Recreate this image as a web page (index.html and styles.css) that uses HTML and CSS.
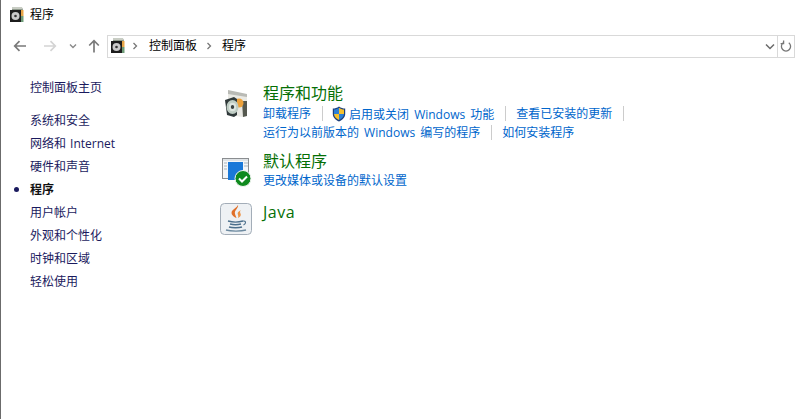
FILE: index.html
```html
<!DOCTYPE html>
<html lang="zh-CN">
<head>
  <meta charset="UTF-8">
  <title>程序</title>
  <link rel="stylesheet" href="styles.css">
</head>
<body>
  <svg class="defs" width="0" height="0">
    <symbol id="disc-box" viewBox="0 0 16 16">
      <path d="M3 0.500h10l1 2v12H3z" fill="#8f9a8c"/>
      <path d="M3 0.500h10l.6 1.600H3z" fill="#c9cdc4"/>
      <path d="M11 3h3.500v6H11z" fill="#e8a648"/>
      <path d="M11 9h3.500v6H11z" fill="#6f9c78"/>
      <rect x="1" y="3" width="11" height="12" fill="#1c1c1c"/>
      <circle cx="6.500" cy="9" r="4" fill="#c9c9c9"/>
      <circle cx="6.500" cy="9" r="1.300" fill="#333"/>
    </symbol>
  </svg>

  <div class="titlebar">
    <svg class="title-icon"><use href="#disc-box"/></svg>
    <span>程序</span>
  </div>

  <div class="navbar">
    <svg class="nav-btn" width="16" height="16" viewBox="0 0 16 16"><path d="M14 8H3M7.500 3.200 2.700 8l4.800 4.800" fill="none" stroke="#7a7a7a" stroke-width="1.700"/></svg>
    <svg class="nav-btn nav-forward" width="16" height="16" viewBox="0 0 16 16"><path d="M2 8h11M8.500 3.200 13.300 8l-4.800 4.800" fill="none" stroke="#d4d4d4" stroke-width="1.700"/></svg>
    <svg class="nav-small" width="8" height="6" viewBox="0 0 8 6"><path d="M1 1.500 4 4.500l3-3" fill="none" stroke="#8a8a8a" stroke-width="1.400"/></svg>
    <svg class="nav-btn nav-up" width="16" height="16" viewBox="0 0 16 16"><path d="M8 14.500V3M3.200 7.500 8 2.700l4.800 4.800" fill="none" stroke="#7a7a7a" stroke-width="1.700"/></svg>
    <div class="address">
      <svg class="address-icon"><use href="#disc-box"/></svg>
      <svg class="crumb-sep" width="6" height="8" viewBox="0 0 6 8"><path d="M1.500 1 4.500 4l-3 3" fill="none" stroke="#777" stroke-width="1.300"/></svg>
      <span class="crumb">控制面板</span>
      <svg class="crumb-sep" width="6" height="8" viewBox="0 0 6 8"><path d="M1.500 1 4.500 4l-3 3" fill="none" stroke="#777" stroke-width="1.300"/></svg>
      <span class="crumb">程序</span>
      <svg class="address-drop" width="10" height="7" viewBox="0 0 10 7"><path d="M1 1.500 5 5.500l4-4" fill="none" stroke="#6a6a6a" stroke-width="1.500"/></svg>
      <div class="address-refresh">
        <svg width="12" height="13" viewBox="0 0 12 13"><path d="M3.200 2.800a4.600 4.600 0 1 0 5.600 0M3.600 0.600v3h-3" fill="none" stroke="#777" stroke-width="1.300"/></svg>
      </div>
    </div>
  </div>

  <div class="main">
    <ul class="sidebar">
      <li class="home">控制面板主页</li>
      <li>系统和安全</li>
      <li>网络和 Internet</li>
      <li>硬件和声音</li>
      <li class="current">程序</li>
      <li>用户帐户</li>
      <li>外观和个性化</li>
      <li>时钟和区域</li>
      <li>轻松使用</li>
    </ul>

    <div class="content">
      <div class="category cat-programs">
        <svg class="cat-icon" width="32" height="32" viewBox="0 0 32 32">
          <path d="M8 3 27 7v20l-4 2L8 27z" fill="#e9e9e4"/>
          <path d="M8 2 27 6v3L8 6z" fill="#b9bab5"/>
          <path d="M22 13h5v15l-4 1z" fill="#55584f"/>
          <circle cx="19" cy="15" r="4.500" fill="#eda23c"/>
          <path d="M5 12l9-3 3 2v16l-3 2-7-2z" fill="#30393a"/>
          <ellipse cx="12.500" cy="19" rx="6" ry="7" fill="#bfcdc4"/>
          <ellipse cx="12.500" cy="19" rx="3.600" ry="4.200" fill="#dfe6e1"/>
          <ellipse cx="12.500" cy="19" rx="1.700" ry="2" fill="#3c4342"/>
        </svg>
        <div class="cat-body">
          <h2>程序和功能</h2>
          <div class="links">
            <a>卸载程序</a>
            <a class="with-shield">
              <svg width="14" height="16" viewBox="0 0 14 16">
                <path d="M7 0.500C5 2 3 2.500 0.800 2.500V8c0 3.500 3 6 6.200 7.500 3.200-1.500 6.200-4 6.200-7.500V2.500C11 2.500 9 2 7 .5z" fill="#1c3f7c"/>
                <path d="M7 1.800V8H2V3.600C3.800 3.500 5.500 3 7 1.800z" fill="#2b7fd6"/>
                <path d="M7 1.800C8.500 3 10.200 3.500 12 3.600V8H7z" fill="#f5c02c"/>
                <path d="M2 8h5v6C4.500 12.800 2.200 11 2 8z" fill="#f5c02c"/>
                <path d="M7 8h5c-.2 3-2.500 4.800-5 6z" fill="#2b7fd6"/>
              </svg>启用或关闭 Windows 功能</a>
            <a>查看已安装的更新</a>
          </div>
          <div class="links">
            <a>运行为以前版本的 Windows 编写的程序</a>
            <a class="last">如何安装程序</a>
          </div>
        </div>
      </div>

      <div class="category cat-default">
        <svg class="cat-icon" width="32" height="32" viewBox="0 0 32 32">
          <rect x="2.500" y="3.500" width="26" height="20" fill="#f4f6f8" stroke="#8a8d90"/>
          <rect x="3" y="4" width="25" height="2" fill="#dfe3e6"/>
          <rect x="8" y="7" width="15" height="18" fill="#1a78d8"/>
          <path d="M4 8h3M4 11h3M4 14h3M24 8h4M24 11h4" stroke="#a9b4bc"/>
          <circle cx="23" cy="23.500" r="8" fill="#0f8a1e" stroke="#f4f6f4"/>
          <path d="M19 23.500l3 3 5-5" fill="none" stroke="#fff" stroke-width="2"/>
        </svg>
        <div class="cat-body">
          <h2>默认程序</h2>
          <div class="links">
            <a class="last">更改媒体或设备的默认设置</a>
          </div>
        </div>
      </div>

      <div class="category">
        <svg class="cat-icon" width="32" height="32" viewBox="0 0 32 32">
          <rect x="0.500" y="0.500" width="31" height="31" rx="4" fill="#eef1f4" stroke="#a3adb8"/>
          <path d="M18 2c1 3-4 5-3 9 .4 1.500 1 2.500 1.500 4-3.500-1.500-6-4-4.500-7 1-1.800 5-3.500 6-6z" fill="#e0702a"/>
          <path d="M21 7c-3 1.500-4 3-3 5 .4.800.4 1.800 0 3 2.500-1 3.500-2.800 2.300-5-.5-1-.3-2 .7-3z" fill="#ec9448"/>
          <path d="M8 18c4 1.200 11 1.200 15 0M10 21c3 .8 8 .8 11 0M9 24c3 1 10 1 13 0" fill="none" stroke="#4c6f8c" stroke-width="1.400"/>
          <path d="M23 18c3-.5 3.500 2.500.5 4" fill="none" stroke="#4c6f8c" stroke-width="1.100"/>
          <path d="M6 27c5 1.500 15 1.500 20 0" fill="none" stroke="#6d8aa0" stroke-width="1.400"/>
        </svg>
        <div class="cat-body">
          <h2 class="latin">Java</h2>
        </div>
      </div>
    </div>
  </div>
</body>
</html>
```

FILE: styles.css
```css
html, body {
  height: 100%;
}
body {
  margin: 0;
  background-color: #fff;
  border-left: 1px solid #6b6b6b;
  box-sizing: border-box;
  font-family: "Open Sans", "Noto Sans CJK SC", sans-serif;
  font-size: 12px;
  color: #000;
  overflow: hidden;
}
.defs {
  position: absolute;
}
.titlebar {
  height: 30px;
  display: flex;
  align-items: center;
  gap: 5px;
  padding-left: 8px;
  line-height: 16px;
}
.title-icon {
  width: 16px;
  height: 16px;
}
.navbar {
  height: 32px;
  display: flex;
  align-items: center;
  padding: 0 10px 0 11px;
}
.nav-forward {
  margin-left: 14px;
}
.nav-small {
  margin-left: 11px;
}
.nav-up {
  margin-left: 9px;
}
.address {
  flex: 1;
  height: 21px;
  margin-left: 5px;
  border: 1px solid #d9d9d9;
  display: flex;
  align-items: center;
  padding-left: 2px;
}
.address-icon {
  width: 16px;
  height: 16px;
  margin-right: -3px;
}
.crumb-sep {
  margin: 0 10px 0 9px;
}
.address-icon + .crumb-sep {
  margin-right: 11px;
}
.crumb {
  line-height: 16px;
}
.address-drop {
  margin-left: auto;
}
.address-refresh {
  width: 16px;
  height: 100%;
  margin-left: 2px;
  border-left: 1px solid #d9d9d9;
  display: flex;
  align-items: center;
  justify-content: center;
}
.main {
  display: flex;
  padding-top: 14px;
}
.sidebar {
  width: 190px;
  margin: 0;
  padding: 0 0 0 29px;
  list-style: none;
  color: #1a1a5e;
  word-spacing: 1px;
}
.sidebar li {
  height: 23px;
  line-height: 23px;
}
.sidebar .home {
  margin-bottom: 10px;
}
.sidebar .current {
  position: relative;
  font-weight: bold;
  color: #111;
}
.sidebar .current::before {
  content: "";
  position: absolute;
  left: -16px;
  top: 9px;
  width: 5px;
  height: 5px;
  border-radius: 50%;
  background-color: #1a1a5e;
}
.content {
  flex: 1;
  padding-top: 6px;
}
.category {
  display: flex;
  gap: 11px;
  align-items: flex-start;
}
.cat-programs {
  height: 68px;
}
.cat-default {
  height: 51px;
}
.cat-icon {
  margin-top: 2px;
  flex: none;
}
.cat-programs .cat-icon {
  margin-top: 6px;
}
.cat-default .cat-icon {
  margin-top: 5px;
}
.cat-default .links {
  margin-top: -1px;
}
.cat-body h2 {
  margin: 0;
  font-size: 16px;
  font-weight: normal;
  line-height: 22px;
  color: #056f05;
}
.cat-body .latin {
  letter-spacing: 0.5px;
}
.links {
  display: flex;
  height: 19px;
  color: #0066cc;
  word-spacing: 2px;
}
.links a {
  padding-right: 11px;
  margin-right: 10px;
  border-right: 1px solid #ccc;
  height: 15px;
  line-height: 15px;
  margin-top: 2px;
  white-space: nowrap;
}
.links .last {
  border-right: none;
}
.links .with-shield {
  margin-left: -1px;
}
.with-shield svg {
  vertical-align: -3px;
  margin-right: 3px;
}
```
